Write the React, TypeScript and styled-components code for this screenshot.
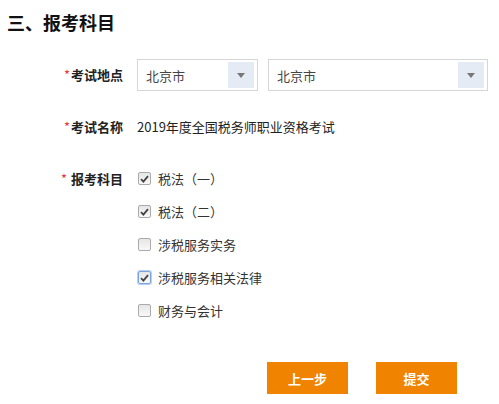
import React from "react";
import styled, { createGlobalStyle } from "styled-components";

const Global = createGlobalStyle`
  html, body { margin: 0; padding: 0; background: #fff; }
  body { font-family: "Noto Sans CJK SC", "Noto Sans", sans-serif; color: #333; }
`;

const Page = styled.div`
  width: 499px;
  height: 404px;
  box-sizing: border-box;
  padding: 10px 0 0 7px;
`;

const Title = styled.h2`
  margin: 0;
  font-size: 18px;
  line-height: 24px;
  font-weight: 700;
  color: #111;
`;

const Form = styled.div`
  display: flex;
  flex-direction: column;
  margin-top: 25px;
`;

const Row = styled.div<{ $mt?: number }>`
  display: grid;
  grid-template-columns: 116px 1fr;
  column-gap: 14px;
  align-items: start;
  margin-top: ${(p) => p.$mt ?? 0}px;
`;

const Label = styled.div<{ $h: number }>`
  text-align: right;
  font-size: 13px;
  font-weight: 700;
  color: #222;
  height: ${(p) => p.$h}px;
  line-height: ${(p) => p.$h}px;
  white-space: nowrap;
`;

const Star = styled.span`
  color: #e5393a;
  font-weight: 400;
  margin-right: 1px;
`;

const Selects = styled.div`
  display: flex;
  gap: 10px;
`;

const Select = styled.div<{ $w: number }>`
  width: ${(p) => p.$w}px;
  height: 32px;
  box-sizing: border-box;
  border: 1px solid #d6d6d6;
  display: flex;
  align-items: center;
  justify-content: space-between;
  padding: 0 3px 0 8px;
  font-size: 13px;
  color: #444;
`;

const Arrow = styled.div`
  width: 26px;
  height: 26px;
  background: #e4ebf4;
  display: flex;
  align-items: center;
  justify-content: center;
  &::after {
    content: "";
    border-left: 4.5px solid transparent;
    border-right: 4.5px solid transparent;
    border-top: 5px solid #777;
  }
`;

const Value = styled.div`
  font-size: 13px;
  line-height: 24px;
  color: #222;
`;

const Checks = styled.div`
  display: flex;
  flex-direction: column;
  gap: 12px;
`;

const CheckRow = styled.div`
  display: flex;
  align-items: center;
  height: 21px;
  gap: 7px;
  font-size: 13px;
  color: #333;
`;

const Box = styled.span<{ $focus?: boolean }>`
  width: 11px;
  height: 11px;
  border: 1px solid ${(p) => (p.$focus ? "#7ba4dc" : "#aaa")};
  box-shadow: ${(p) => (p.$focus ? "0 0 0 1px #b8d0f0" : "none")};
  border-radius: 2px;
  background: linear-gradient(#e6e6e6, #f8f8f8);
  display: flex;
  align-items: center;
  justify-content: center;
  margin-left: 1px;
`;

const Buttons = styled.div`
  display: flex;
  gap: 28px;
  padding-left: 260px;
  margin-top: 41px;
`;

const Button = styled.button`
  width: 81px;
  height: 32px;
  border: none;
  background: #f08300;
  color: #fff;
  font-family: inherit;
  font-size: 13px;
  font-weight: 700;
  padding: 0;
`;

const Tick = () => (
  <svg width="9" height="8" viewBox="0 0 9 8">
    <path d="M1 4.2 L3.4 6.6 L8 1.2" fill="none" stroke="#444" strokeWidth="1.8" />
  </svg>
);

const items = [
  { t: "税法（一）", c: true },
  { t: "税法（二）", c: true },
  { t: "涉税服务实务", c: false },
  { t: "涉税服务相关法律", c: true, f: true },
  { t: "财务与会计", c: false },
];

export default function App() {
  return (
    <>
      <Global />
      <Page>
        <Title>三、报考科目</Title>
        <Form>
          <Row>
            <Label $h={32}>
              <Star>*</Star>考试地点
            </Label>
            <Selects>
              <Select $w={121}>
                北京市
                <Arrow />
              </Select>
              <Select $w={220}>
                北京市
                <Arrow />
              </Select>
            </Selects>
          </Row>
          <Row $mt={24}>
            <Label $h={24}>
              <Star>*</Star>考试名称
            </Label>
            <Value>2019年度全国税务师职业资格考试</Value>
          </Row>
          <Row $mt={29}>
            <Label $h={21}>
              <Star>*</Star> 报考科目
            </Label>
            <Checks>
              {items.map((it) => (
                <CheckRow key={it.t}>
                  <Box $focus={it.f}>{it.c && <Tick />}</Box>
                  {it.t}
                </CheckRow>
              ))}
            </Checks>
          </Row>
          <Buttons>
            <Button>上一步</Button>
            <Button>提交</Button>
          </Buttons>
        </Form>
      </Page>
    </>
  );
}
